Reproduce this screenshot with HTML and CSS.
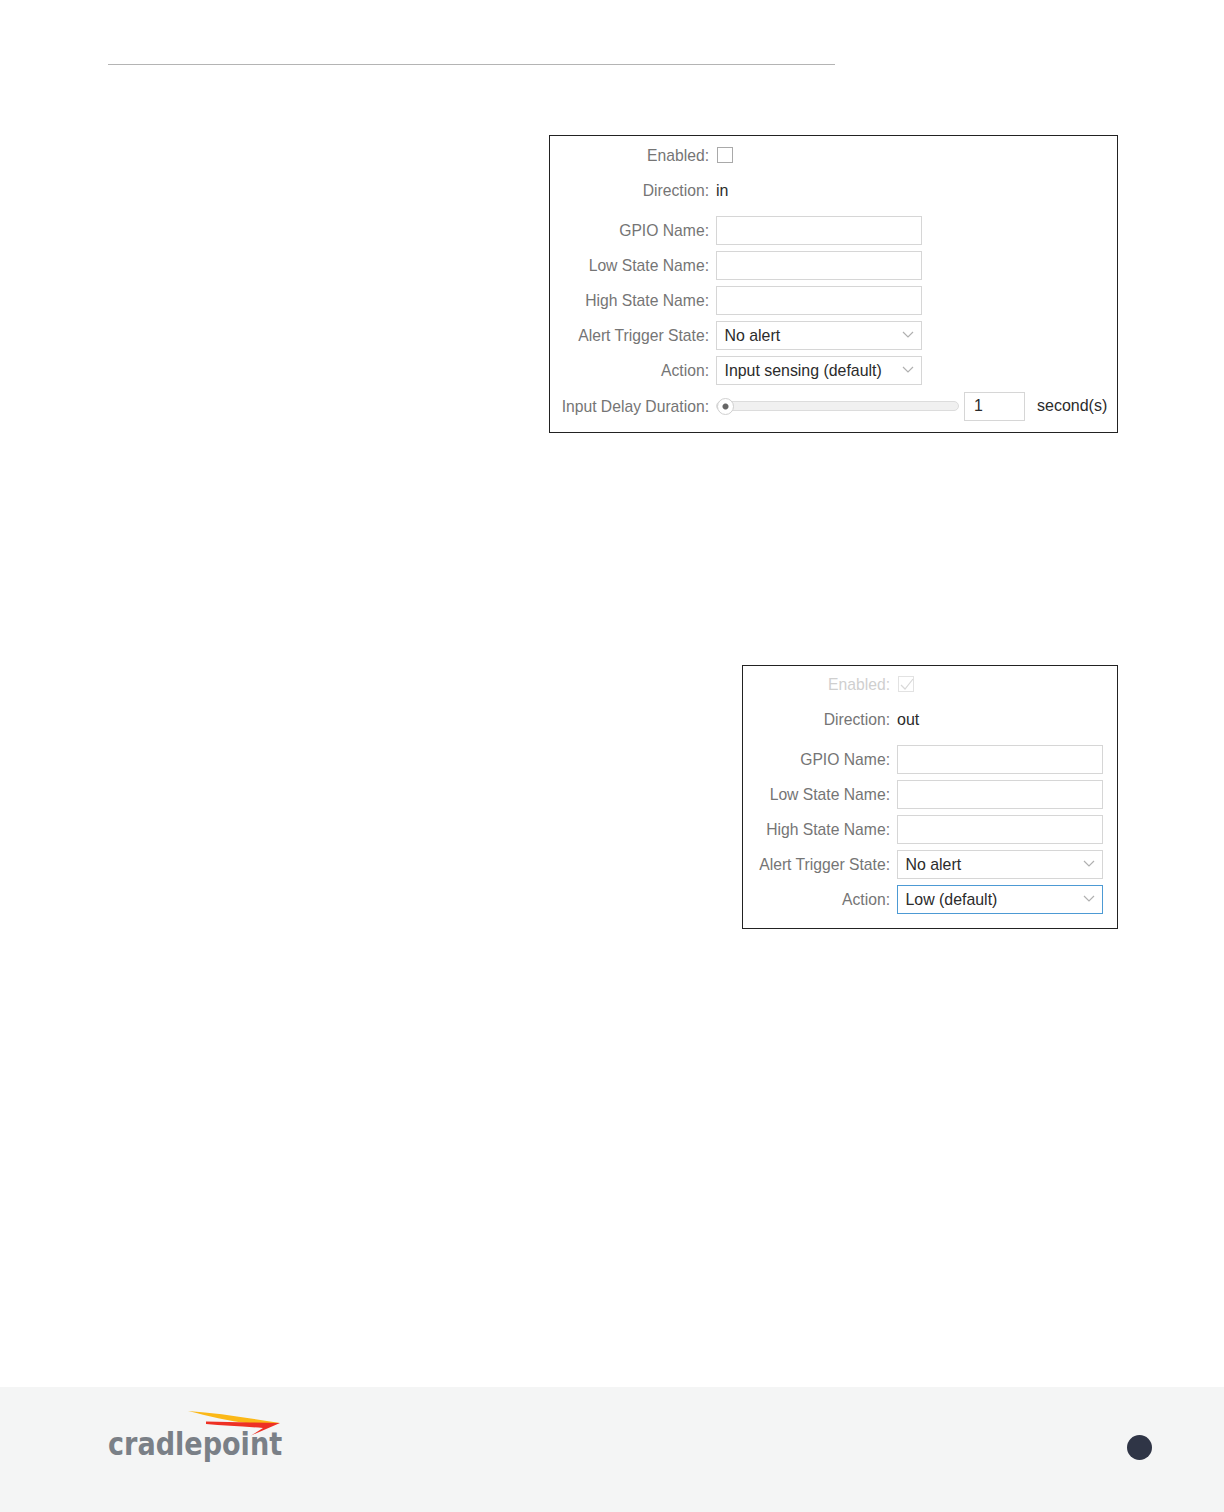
FILE: index.html
```html
<!DOCTYPE html>
<html>
<head>
	<title>GPIO</title>
	<meta charset="utf-8">
	<link rel="stylesheet" href="styles.css">
</head>
<body>
	<div class="page">
		<div class="top-rule"></div>

		<form class="gpio-box gpio-in">
			<label class="lbl">Enabled:</label>
			<div class="ctl"><span class="check"></span></div>
			<label class="lbl">Direction:</label>
			<div class="val dir">in</div>
			<label class="lbl">GPIO Name:</label>
			<input class="field" type="text">
			<label class="lbl">Low State Name:</label>
			<input class="field" type="text">
			<label class="lbl">High State Name:</label>
			<input class="field" type="text">
			<label class="lbl">Alert Trigger State:</label>
			<div class="field sel">No alert
				<svg class="chev" width="12" height="7" viewBox="0 0 12 7"><path d="M1 1l5 5 5-5" fill="none" stroke="#b0b0b0" stroke-width="1.2"/></svg>
			</div>
			<label class="lbl">Action:</label>
			<div class="field sel">Input sensing (default)
				<svg class="chev" width="12" height="7" viewBox="0 0 12 7"><path d="M1 1l5 5 5-5" fill="none" stroke="#b0b0b0" stroke-width="1.2"/></svg>
			</div>
			<label class="lbl">Input Delay Duration:</label>
			<div class="ctl slider-row">
				<div class="track"><span class="thumb"></span></div>
				<input class="field num" type="text" value="1">
				<span class="val unit">second(s)</span>
			</div>
		</form>

		<form class="gpio-box gpio-out">
			<label class="lbl off">Enabled:</label>
			<div class="ctl">
				<span class="check check-off">
					<svg width="15" height="15" viewBox="0 0 15 15"><path d="M2 8l4 4 8-10" fill="none" stroke="#d8d8d8" stroke-width="1.2"/></svg>
				</span>
			</div>
			<label class="lbl">Direction:</label>
			<div class="val dir">out</div>
			<label class="lbl">GPIO Name:</label>
			<input class="field" type="text">
			<label class="lbl">Low State Name:</label>
			<input class="field" type="text">
			<label class="lbl">High State Name:</label>
			<input class="field" type="text">
			<label class="lbl">Alert Trigger State:</label>
			<div class="field sel">No alert
				<svg class="chev" width="12" height="7" viewBox="0 0 12 7"><path d="M1 1l5 5 5-5" fill="none" stroke="#b0b0b0" stroke-width="1.2"/></svg>
			</div>
			<label class="lbl">Action:</label>
			<div class="field sel focus">Low (default)
				<svg class="chev" width="12" height="7" viewBox="0 0 12 7"><path d="M1 1l5 5 5-5" fill="none" stroke="#b0b0b0" stroke-width="1.2"/></svg>
			</div>
		</form>

		<div class="footer">
			<div class="logo">
				<span class="logo-text">cradlepoint</span>
				<svg class="flame" width="96" height="26" viewBox="0 0 96 26">
					<path d="M0 0C30 2 60 7 92 12L62 12.5C40 10 20 5 0 0z" fill="#fbb817"/>
					<path d="M18 10.5L62 11.5L92 12L63 24.5L75 17C55 15.5 35 14.5 18 13z" fill="#ee3124"/>
				</svg>
			</div>
			<span class="dot"></span>
		</div>
	</div>
</body>
</html>
```

FILE: styles.css
```css
body{
	margin: 0;
	background: #fff;
	font-family: "Liberation Sans", Arial, sans-serif;
	font-size: 16px;
	color: #757575;
}
.page{
	width: 1224px;
	height: 1512px;
	display: flex;
	flex-direction: column;
}
.top-rule{
	width: 727px;
	height: 1px;
	margin: 64px 0 0 108px;
	background: #b4b4b4;
}
/*form boxes*/
.gpio-box{
	display: grid;
	column-gap: 7px;
	row-gap: 6px;
	grid-template-rows: 29.2px 33.8px repeat(6, 29.2px);
	align-self: flex-end;
	margin-right: 106px;
	border: 1px solid #222;
	box-sizing: border-box;
	background: #fff;
}
.gpio-in{
	width: 569px;
	height: 298px;
	margin-top: 70px;
	padding-top: 4.7px;
	grid-template-columns: 159px 206px;
}
.gpio-out{
	width: 376px;
	height: 264px;
	margin-top: 232px;
	padding-top: 3.7px;
	grid-template-columns: 147px 206px;
}
.lbl{
	font-size: 15.7px;
	line-height: 29px;
	text-align: right;
	white-space: nowrap;
}
.off{
	color: #cfcfcf;
}
.ctl{
	display: flex;
	align-items: center;
}
.val{
	color: #2b2b2b;
}
.dir{
	line-height: 29px;
}
/*inputs*/
.check{
	width: 16px;
	height: 16px;
	margin-left: 1px;
	border: 1px solid #a9a9a9;
	box-sizing: border-box;
}
.check-off{
	border-color: #e2e2e2;
}
.check-off svg{
	display: block;
}
.field{
	width: 206px;
	height: 29px;
	margin: 0;
	padding: 0 7.5px;
	border: 1px solid #d6d6d6;
	box-sizing: border-box;
	font-family: inherit;
	font-size: 15.9px;
	line-height: 27px;
	color: #2b2b2b;
	background: #fff;
}
.sel{
	position: relative;
}
.focus{
	border-color: #4d9ad4;
}
.chev{
	position: absolute;
	right: 7px;
	top: 9px;
}
.slider-row{
	width: 391px;
}
.track{
	position: relative;
	flex: none;
	width: 243px;
	height: 10px;
	border: 1px solid #dcdcdc;
	border-radius: 5px;
	box-sizing: border-box;
	background: #f0f0f0;
}
.thumb{
	position: absolute;
	left: 0;
	top: -4.5px;
	width: 17px;
	height: 17px;
	border: 1px solid #cfcfcf;
	border-radius: 50%;
	box-sizing: border-box;
	background: radial-gradient(circle, #666 0, #666 2.5px, #fff 3.5px);
}
.num{
	flex: none;
	width: 61px;
	margin-left: 5px;
	padding-left: 9px;
}
.unit{
	margin-left: 12px;
	white-space: nowrap;
}
/*footer*/
.footer{
	height: 125px;
	margin-top: auto;
	padding: 0 72px 0 108px;
	display: flex;
	justify-content: space-between;
	align-items: center;
	background: #f4f5f5;
}
.logo{
	position: relative;
	width: 175px;
	height: 50px;
	margin-bottom: 2px;
}
.logo-text{
	position: absolute;
	left: 0;
	top: 2px;
	font-family: "DejaVu Sans", sans-serif;
	font-weight: bold;
	font-stretch: condensed;
	font-size: 32px;
	line-height: 36px;
	color: #7a8087;
	transform: scaleX(0.94);
	transform-origin: left;
}
.flame{
	position: absolute;
	left: 80px;
	top: -12.5px;
}
.dot{
	width: 25px;
	height: 25px;
	margin-bottom: 5px;
	border-radius: 50%;
	background: #2f3546;
}
```
